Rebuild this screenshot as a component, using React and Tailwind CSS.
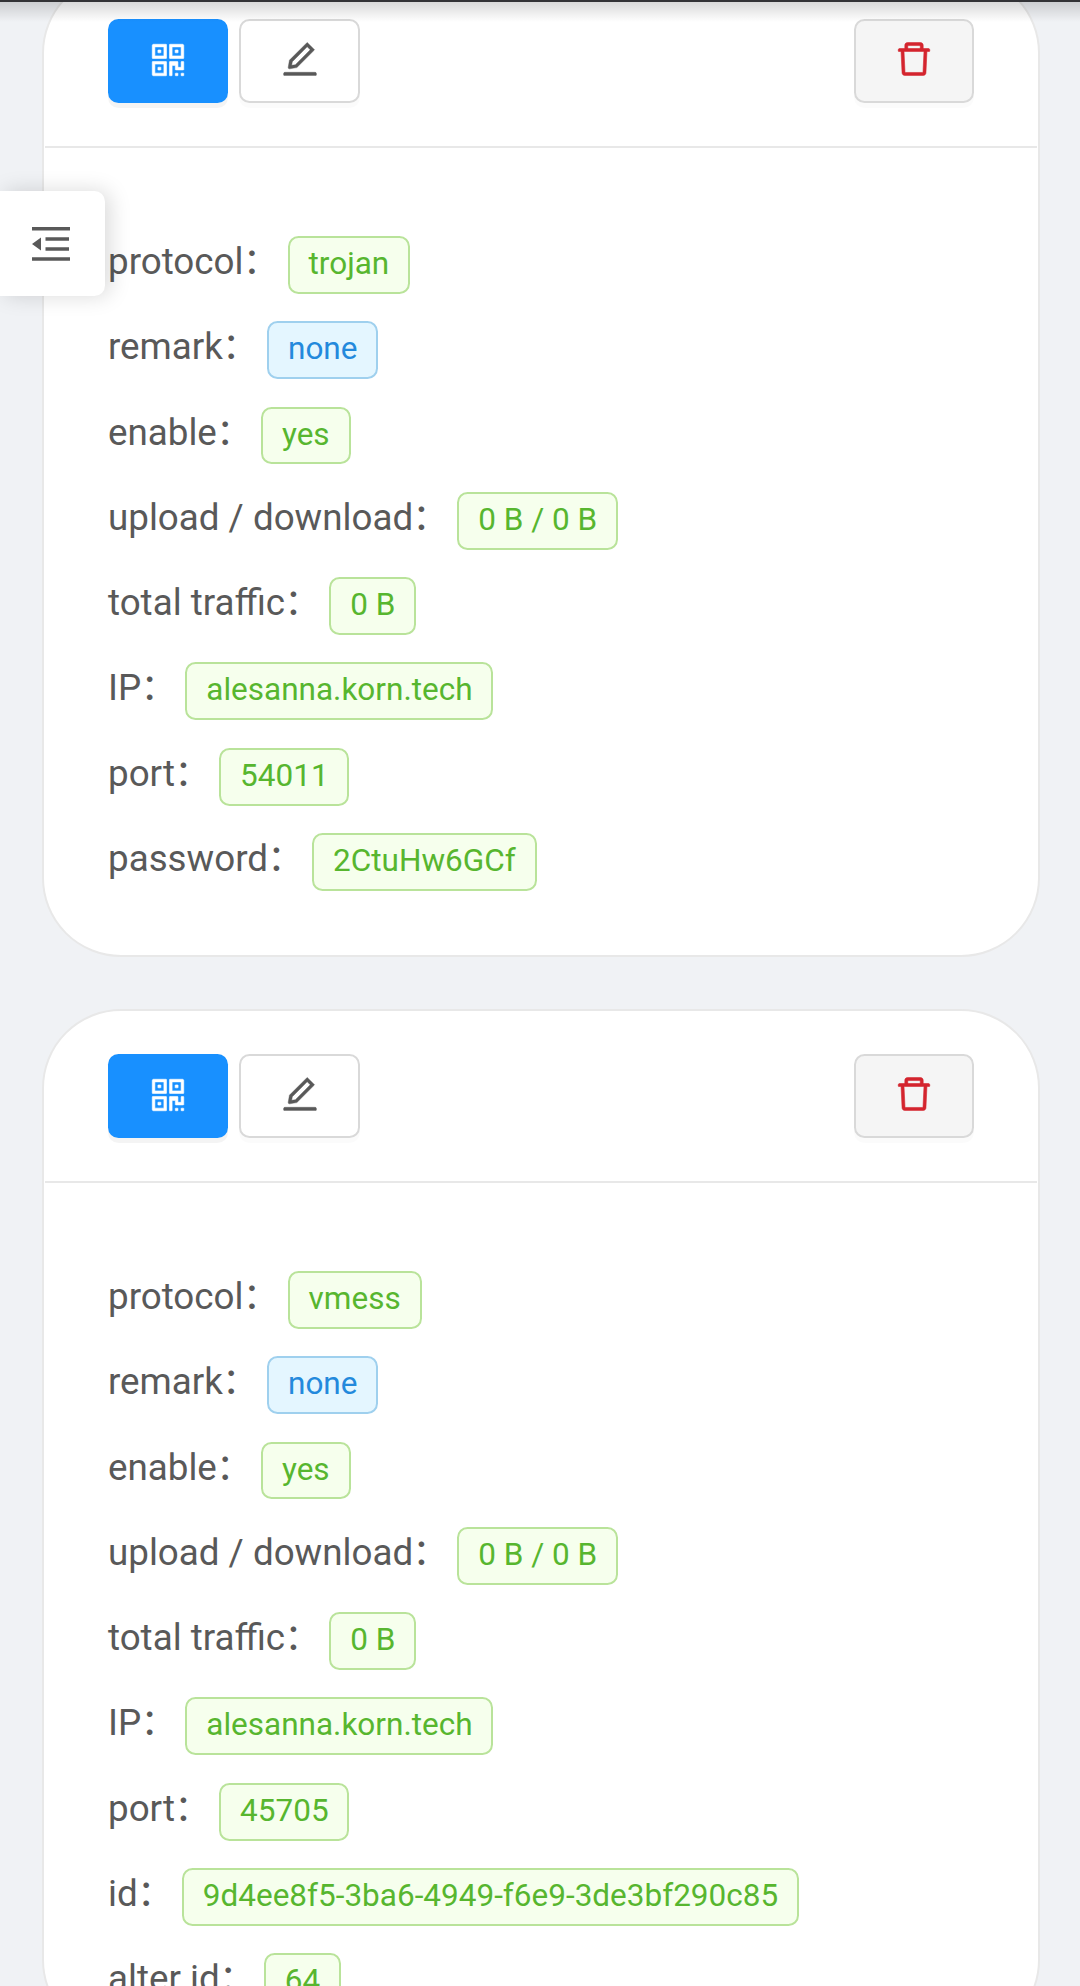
import React from "react";
import { AiOutlineQrcode, AiOutlineEdit, AiOutlineDelete } from "react-icons/ai";

const common = [
  { label: "remark", value: "none", blue: true },
  { label: "enable", value: "yes" },
  { label: "upload / download", value: "0 B / 0 B" },
  { label: "total traffic", value: "0 B" },
  { label: "IP", value: "alesanna.korn.tech" },
];

const inbounds = [
  [
    { label: "protocol", value: "trojan" },
    ...common,
    { label: "port", value: "54011" },
    { label: "password", value: "2CtuHw6GCf" },
  ],
  [
    { label: "protocol", value: "vmess" },
    ...common,
    { label: "port", value: "45705" },
    { label: "id", value: "9d4ee8f5-3ba6-4949-f6e9-3de3bf290c85" },
    { label: "alter id", value: "64" },
  ],
];

function Tag({ blue, children }) {
  const tone = blue
    ? "border-[#9fd0ee] bg-[#e4f6ff] text-[#2389dc]"
    : "border-[#b9e39a] bg-[#f6ffed] text-[#57b62f]";
  return (
    <span
      className={
        "h-[57.75px] rounded-[10.5px] border-2 px-[18.9px] text-[31.5px] leading-[52.5px] whitespace-nowrap " + tone
      }
    >
      {children}
    </span>
  );
}

function Row({ label, value, blue }) {
  return (
    <div className="flex h-[85.3px] items-baseline text-[36.75px] leading-[55px] text-[#595959]">
      <span className="whitespace-pre">{label}</span>
      <span className="-ml-[0.8px] w-[45px]">：</span>
      <Tag blue={blue}>{value}</Tag>
    </div>
  );
}

function Card({ rows }) {
  return (
    <section className="min-h-[983px] rounded-[79px] border-2 border-[#e8e8e8] bg-white">
      <header className="mx-px flex h-[172px] items-start border-b-2 border-[#e8e8e8] px-[63px] pt-[43px]">
        <button className="flex h-[84px] w-[120px] items-center justify-center rounded-[10.5px] bg-[#1890ff] pb-[3px] text-white shadow-[0_5px_0_rgba(0,0,0,0.045)]">
          <AiOutlineQrcode className="size-[42px] stroke-current stroke-[14]" />
        </button>
        <button className="ml-[11px] flex h-[84px] w-[121px] items-center justify-center rounded-[10.5px] border-2 border-[#d9d9d9] bg-white pb-[4px] text-[#595959] shadow-[0_5px_0_rgba(0,0,0,0.015)]">
          <AiOutlineEdit className="size-[42px] stroke-current stroke-[10]" />
        </button>
        <button className="ml-auto flex h-[84px] w-[120px] items-center justify-center rounded-[10.5px] border-2 border-[#d9d9d9] bg-[#f5f5f5] pb-[4px] text-[#d4242e] shadow-[0_5px_0_rgba(0,0,0,0.015)]">
          <AiOutlineDelete className="size-[42px] stroke-current stroke-[14]" strokeLinejoin="round" />
        </button>
      </header>
      <div className="px-[64px] pt-[86px]">
        {rows.map((row) => (
          <Row key={row.label} {...row} />
        ))}
      </div>
    </section>
  );
}

export default function App() {
  return (
    <div className="relative h-[1986px] w-[1080px] overflow-hidden bg-[#f0f2f5] font-[Roboto,'Noto_Sans_CJK_SC',sans-serif]">
      <main className="-mt-[26px] flex flex-col gap-[52px] pr-[40px] pl-[42px]">
        {inbounds.map((rows) => (
          <Card key={rows[0].value} rows={rows} />
        ))}
      </main>

      <div className="absolute inset-x-0 top-0 h-[22px] border-t-2 border-[#333336] bg-linear-to-b from-black/15 to-transparent" />

      <button
        aria-label="Open menu"
        className="absolute top-[191px] left-0 flex h-[105px] w-[105px] items-center rounded-r-[10.5px] bg-white pl-[32px] text-[#595959] shadow-[5px_0_21px_rgba(0,0,0,0.15)]"
      >
        <svg className="h-[34px] w-[38px]" viewBox="0 0 38 34" fill="currentColor">
          <path d="M0 0h38v3.6H0zM13.5 10.2H37v3.6H13.5zM13.5 20.2H37v3.6H13.5zM0 30.2h38v3.6H0zM9 10.5v13L0 17z" />
        </svg>
      </button>
    </div>
  );
}
